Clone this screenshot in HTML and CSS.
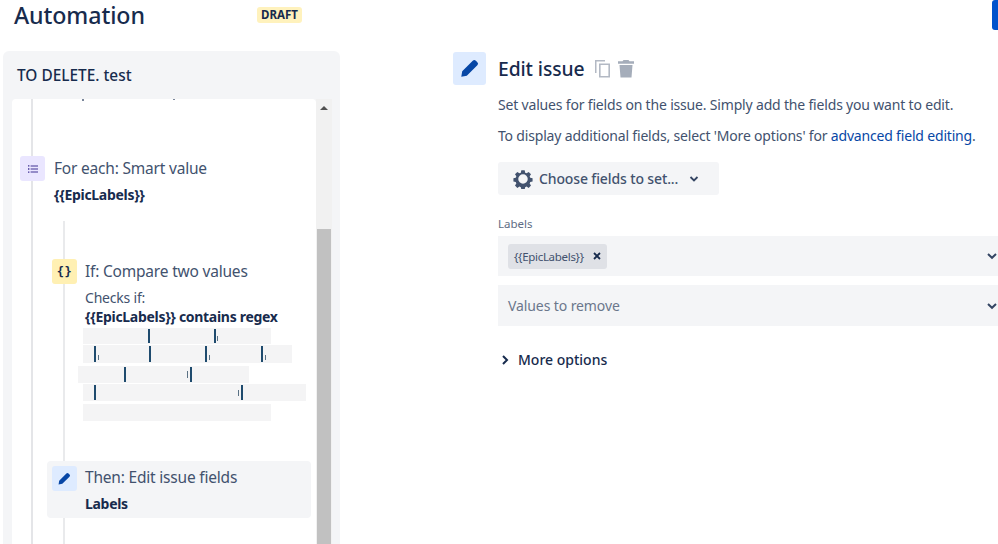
FILE: index.html
```html
<!DOCTYPE html>
<html lang="en">
<head>
<meta charset="utf-8">
<title>Automation</title>
<link rel="stylesheet" href="styles.css">
</head>
<body>
<div class="page">
  <aside class="left">
    <header class="top">
      <h1 class="title">Automation</h1>
      <span class="lozenge">DRAFT</span>
    </header>
    <section class="panel">
      <h2 class="rule-name">TO DELETE. test</h2>
      <div class="scroller">
        <div class="canvas">
          <div class="line-outer"></div>
          <div class="line-inner"></div>
          <i class="crumb c1"></i><i class="crumb c2"></i>
          <div class="node node-each">
            <span class="ico ico-purple">
              <svg width="12" height="12" viewBox="0 0 12 12"><path d="M1 2.200h1.400v1.400H1zM1 5.300h1.400v1.400H1zM1 8.400h1.400v1.400H1zM3.600 2.400H11v1H3.600zM3.600 5.500H11v1H3.600zM3.600 8.600H11v1H3.600z" fill="#403294"/></svg>
            </span>
            <div class="node-body">
              <div class="node-title">For each: Smart value</div>
              <div class="node-strong node-strong-each">{{EpicLabels}}</div>
            </div>
          </div>
          <div class="node node-if">
            <span class="ico ico-yellow"><span class="braces">{}</span></span>
            <div class="node-body">
              <div class="node-title">If: Compare two values</div>
              <div class="node-sub">Checks if:</div>
              <div class="node-strong">{{EpicLabels}} contains regex</div>
            </div>
          </div>
          <div class="redacted">
            <div class="red-row r1"><i class="m m1a"></i><i class="m m1b"></i><i class="tick t1"></i></div>
            <div class="red-row r2"><i class="m m2a"></i><i class="m m2b"></i><i class="m m2c"></i><i class="m m2d"></i><i class="tick t2a"></i><i class="tick t2c"></i><i class="tick t2d"></i></div>
            <div class="red-row r3"><i class="m m3a"></i><i class="m m3b"></i><i class="tick t3"></i></div>
            <div class="red-row r4"><i class="m m4a"></i><i class="m m4b"></i><i class="tick t4"></i></div>
            <div class="red-row r5"></div>
          </div>
          <div class="node node-then">
            <span class="ico ico-blue">
              <svg width="15" height="15" viewBox="0 0 24 24"><path d="M3.500 15.500 15 4a2.400 2.400 0 0 1 3.400 0l1.600 1.600a2.400 2.400 0 0 1 0 3.400L8.500 20.500 2.500 21.500z" fill="#0747a6"/></svg>
            </span>
            <div class="node-body">
              <div class="node-title">Then: Edit issue fields</div>
              <div class="node-strong node-strong-then">Labels</div>
            </div>
          </div>
        </div>
        <div class="scrollbar">
          <span class="arrow-up"></span>
          <span class="thumb"></span>
        </div>
      </div>
    </section>
  </aside>
  <main class="right">
    <span class="primary-edge"></span>
    <div class="head">
      <span class="head-ico">
        <svg width="22" height="22" viewBox="0 0 24 24"><path d="M3.500 15.500 15 4a2.400 2.400 0 0 1 3.400 0l1.600 1.600a2.400 2.400 0 0 1 0 3.400L8.500 20.500 2.500 21.500z" fill="#0747a6"/></svg>
      </span>
      <h2 class="head-title">Edit issue</h2>
      <svg class="act act-copy" width="17" height="19" viewBox="0 0 17 19"><path d="M1 1h10v1.500H2.500V14H1z" fill="#b3b9c4"/><path d="M5 4.500h11V18.500H5zM6.600 6v11h7.800V6z" fill="#b3b9c4" fill-rule="evenodd"/></svg>
      <svg class="act act-trash" width="18" height="19" viewBox="0 0 18 19"><path d="M6.500 1h5l1 1.300H17v2.400H1V2.300h4.500zM2.500 6h13l-1 12.500h-11z" fill="#a5adba"/></svg>
    </div>
    <div class="form">
      <p class="desc">Set values for fields on the issue. Simply add the fields you want to edit.</p>
      <p class="desc desc-2">To display additional fields, select 'More options' for <a class="link">advanced field editing</a>.</p>
      <button class="choose">
        <svg width="20" height="20" viewBox="0 0 24 24"><path fill="#42526e" fill-rule="evenodd" d="M10 1.500h4l.6 2.900 1.700.7 2.500-1.600 2.800 2.800-1.600 2.500.7 1.700 2.800.6v4l-2.800.6-.7 1.700 1.600 2.500-2.800 2.800-2.500-1.600-1.700.7-.6 2.800h-4l-.6-2.800-1.700-.7-2.500 1.600-2.800-2.800 1.600-2.500-.7-1.700-2.800-.6v-4l2.800-.6.700-1.700-1.600-2.500 2.800-2.800 2.500 1.600 1.700-.7zM12 6.300a5.700 5.700 0 1 0 0 11.400 5.700 5.700 0 0 0 0-11.400z"/></svg>
        <span class="choose-text">Choose fields to set...</span>
        <svg class="chev-small" width="12" height="12" viewBox="0 0 12 12"><path d="M2.500 4l3.500 3.500L9.500 4" fill="none" stroke="#344563" stroke-width="1.800"/></svg>
      </button>
      <label class="field-label">Labels</label>
      <div class="select select-labels">
        <span class="tag">{{EpicLabels}}<svg class="tag-x" width="8" height="8" viewBox="0 0 8 8"><path d="M1 1l6 6M7 1L1 7" stroke="#172b4d" stroke-width="1.800"/></svg></span>
        <svg class="chev" width="12" height="12" viewBox="0 0 12 12"><path d="M2 4l4 3.800L10 4" fill="none" stroke="#344563" stroke-width="2"/></svg>
      </div>
      <div class="select select-remove">
        <span class="placeholder">Values to remove</span>
        <svg class="chev" width="12" height="12" viewBox="0 0 12 12"><path d="M2 4l4 3.800L10 4" fill="none" stroke="#344563" stroke-width="2"/></svg>
      </div>
      <div class="more">
        <svg width="10" height="12" viewBox="0 0 10 12"><path d="M3 2l4 4-4 4" fill="none" stroke="#172b4d" stroke-width="2"/></svg>
        <span>More options</span>
      </div>
    </div>
  </main>
</div>
</body>
</html>
```

FILE: styles.css
```css
* { box-sizing: border-box; }
html, body { margin: 0; padding: 0; height: 100%; background: #fff; overflow: hidden; }
body { font-family: "Noto Sans", "Open Sans", sans-serif; color: #172b4d; }
.page { display: flex; width: 998px; height: 544px; overflow: hidden; }

.left { width: 337px; margin-left: 3px; flex: none; display: flex; flex-direction: column; }
.top { height: 51px; display: flex; align-items: flex-start; }
.title { margin: 0 0 0 11px; font-size: 23.2px; line-height: 30px; font-weight: 500; letter-spacing: -0.1px; color: #172b4d; width: 243px; flex: none; }
.lozenge { margin: 7px 0 0 0; background: #fff2bd; border-radius: 3px; padding: 0 4px; font-size: 11.5px; line-height: 16px; font-weight: 700; color: #172b4d; }

.panel { flex: 1; background: #f4f5f7; border-radius: 6px 6px 0 0; display: flex; flex-direction: column; padding: 0 9px; min-height: 0; }
.rule-name { margin: 0; height: 48px; padding: 15px 0 0 5px; font-size: 15.4px; line-height: 20px; font-weight: 500; color: #172b4d; }

.scroller { flex: 1; display: flex; min-height: 0; }
.canvas { position: relative; width: 304px; flex: none; background: #fff; border-radius: 4px 4px 0 0; overflow: hidden; padding: 57px 0 0 8px; }
.line-outer { position: absolute; left: 19px; top: 0; bottom: 0; width: 2px; background: #e4e5e8; }
.line-inner { position: absolute; left: 51px; top: 122px; bottom: 0; width: 2px; background: #e9eaec; }
.crumb { position: absolute; top: 0; width: 2px; height: 2px; background: #7a869a; }
.c1 { left: 70px; } .c2 { left: 161px; height: 1px; }

.scrollbar { position: relative; width: 16px; flex: none; background: #f1f1f1; }
.arrow-up { position: absolute; left: 4px; top: 7px; width: 0; height: 0; border-left: 4px solid transparent; border-right: 4px solid transparent; border-bottom: 4px solid #505050; }
.thumb { position: absolute; left: 1px; right: 1px; top: 130px; bottom: 0; background: #c1c1c1; }

.node { position: relative; display: flex; }
.ico { flex: none; width: 25px; height: 25px; border-radius: 3px; display: flex; align-items: center; justify-content: center; }
.ico-purple { background: #eae6ff; }
.ico-yellow { background: #fff0b3; }
.ico-blue { background: #deebff; }
.braces { font-family: "DejaVu Sans Mono", monospace; font-size: 12px; font-weight: 700; color: #172b4d; letter-spacing: 0.5px; }
.node-title { font-size: 15.5px; line-height: 22px; letter-spacing: -0.2px; color: #42526e; margin-top: 1px; }
.node-sub { font-size: 14px; line-height: 18px; letter-spacing: -0.2px; color: #42526e; margin-top: 7px; }
.node-strong { font-size: 14px; line-height: 20px; font-weight: 700; letter-spacing: -0.3px; color: #172b4d; }
.node-strong-each { margin-top: 6px; }
.node-strong-then { margin-top: 6px; }

.node-each .node-body { margin-left: 9px; }
.node-if { margin: 54px 0 0 32px; }
.node-if .node-body { margin-left: 8px; }
.node-then { margin: 40px 0 0 27px; width: 264px; height: 57px; padding: 5px 0 0 5px; background: #f4f5f7; border-radius: 4px; }
.node-then .node-body { margin-left: 8px; }
.node-then .node-title { margin-top: 0; }

.redacted { position: relative; margin: 0; }
.red-row { position: relative; background: #f4f4f5; }
.r1 { width: 188px; height: 16px; margin: 1px 0 0 63px; }
.r2 { width: 209px; height: 18px; margin: 1px 0 0 63px; }
.r3 { width: 171px; height: 17px; margin: 3px 0 0 58px; }
.r4 { width: 223px; height: 17px; margin: 1px 0 0 63px; }
.r5 { width: 188px; height: 17px; margin: 3px 0 0 63px; }
.m { position: absolute; top: 1px; bottom: 1px; width: 2px; background: #1f4b6e; }
.m1a { left: 65px; } .m1b { left: 131px; }
.m2a { left: 11px; } .m2b { left: 66px; } .m2c { left: 122px; } .m2d { left: 178px; }
.m3a { left: 46px; } .m3b { left: 112px; }
.m4a { left: 11px; } .m4b { left: 158px; }
.tick { position: absolute; bottom: 3px; width: 1px; height: 5px; background: #5a7184; }
.t1 { left: 134px; } .t2a { left: 15px; } .t2c { left: 126px; } .t2d { left: 182px; }
.t3 { left: 109px; bottom: 5px; height: 7px; } .t4 { left: 155px; bottom: 5px; height: 6px; }

.right { position: relative; flex: 1; min-width: 0; padding: 51px 0 0 113px; }
.primary-edge { position: absolute; right: 0; top: 0; width: 6px; height: 30px; background: #0052cc; border-radius: 3px 0 0 3px; }
.head { display: flex; align-items: center; }
.head-ico { flex: none; width: 33px; height: 33px; background: #deebff; border-radius: 3px; display: flex; align-items: center; justify-content: center; }
.head-title { margin: 1px 0 0 12px; font-size: 19.3px; line-height: 33px; font-weight: 500; letter-spacing: -0.1px; color: #172b4d; }
.act { display: block; }
.act-copy { margin-left: 10px; margin-top: 1px; }
.act-trash { margin-left: 6px; }

.form { margin: 0 0 0 45px; width: 500px; }
.desc { margin: 10px 0 0; font-size: 14px; line-height: 20px; letter-spacing: -0.18px; color: #42526e; white-space: nowrap; }
.desc-2 { margin-top: 11px; }
.link { color: #0747a6; }
.choose { display: flex; align-items: center; margin-top: 16px; width: 221px; height: 33px; padding: 0 0 0 15px; border: 0; background: #f4f5f7; border-radius: 3px; font: inherit; color: #42526e; }
.choose-text { margin-left: 6px; font-size: 14px; font-weight: 500; letter-spacing: -0.13px; }
.chev-small { margin-left: 10px; }
.field-label { display: block; margin-top: 21px; font-size: 11.5px; line-height: 16px; color: #5e6c84; }
.select { display: flex; align-items: center; justify-content: space-between; background: #f4f5f7; height: 41px; padding: 0 0 0 10px; width: 500px; }
.select-labels { margin-top: 4px; height: 40px; }
.select-remove { margin-top: 9px; }
.chev { flex: none; }
.tag { display: flex; align-items: center; height: 25px; padding: 0 6px; background: #dfe1e6; border-radius: 3px; font-size: 11.5px; letter-spacing: -0.3px; color: #42526e; }
.tag-x { margin-left: 9px; }
.placeholder { font-size: 14px; letter-spacing: -0.1px; color: #6b778c; }
.more { display: flex; align-items: center; margin-top: 24px; font-size: 14px; line-height: 20px; font-weight: 500; color: #172b4d; gap: 8px; padding-left: 2px; }
```
